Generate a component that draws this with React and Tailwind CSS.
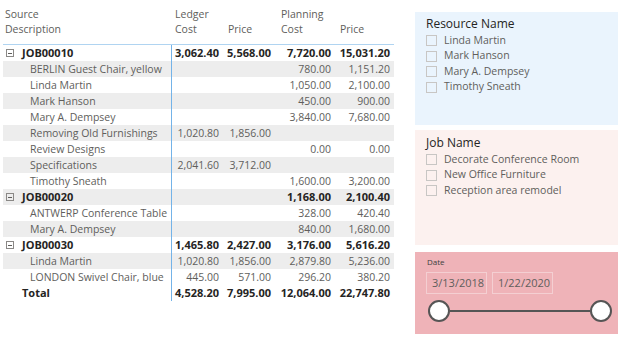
import React from "react";

const rows = [
  { t: "job", n: "JOB00010", v: ["3,062.40", "5,568.00", "7,720.00", "15,031.20"] },
  { n: "BERLIN Guest Chair, yellow", v: ["", "", "780.00", "1,151.20"] },
  { n: "Linda Martin", v: ["", "", "1,050.00", "2,100.00"] },
  { n: "Mark Hanson", v: ["", "", "450.00", "900.00"] },
  { n: "Mary A. Dempsey", v: ["", "", "3,840.00", "7,680.00"] },
  { n: "Removing Old Furnishings", v: ["1,020.80", "1,856.00", "", ""] },
  { n: "Review Designs", v: ["", "", "0.00", "0.00"] },
  { n: "Specifications", v: ["2,041.60", "3,712.00", "", ""] },
  { n: "Timothy Sneath", v: ["", "", "1,600.00", "3,200.00"] },
  { t: "job", n: "JOB00020", v: ["", "", "1,168.00", "2,100.40"] },
  { n: "ANTWERP Conference Table", v: ["", "", "328.00", "420.40"] },
  { n: "Mary A. Dempsey", v: ["", "", "840.00", "1,680.00"] },
  { t: "job", n: "JOB00030", v: ["1,465.80", "2,427.00", "3,176.00", "5,616.20"] },
  { n: "Linda Martin", v: ["1,020.80", "1,856.00", "2,879.80", "5,236.00"] },
  { n: "LONDON Swivel Chair, blue", v: ["445.00", "571.00", "296.20", "380.20"] },
  { t: "total", n: "Total", v: ["4,528.20", "7,995.00", "12,064.00", "22,747.80"] },
];

const font = { fontFamily: "'Open Sans', 'Noto Sans', sans-serif" };

function Collapse() {
  return (
    <div className="ml-[3px] mr-[8px] w-[8px] h-[8px] border border-[#8a8886] flex items-center justify-center shrink-0">
      <div className="w-[4px] h-[1px] bg-[#605e5c]" />
    </div>
  );
}

function Row({ r, i }) {
  const bold = r.t === "job" || r.t === "total";
  const gray = r.t !== "total" && i % 2 === 1;
  const textCls = bold ? "font-bold text-[#252423] text-[11px]" : "text-[#605e5c] text-[10.5px]";
  return (
    <div
      className={`grid grid-cols-[168px_53px_53px_59px_58px] h-[16px] items-center leading-[16px] ${
        gray ? "bg-[#ededed]" : "bg-white"
      } ${textCls}`}
    >
      <div className="flex items-center h-full whitespace-nowrap overflow-hidden">
        {r.t === "job" ? (
          <>
            <Collapse />
            <span>{r.n}</span>
          </>
        ) : r.t === "total" ? (
          <span className="pl-[19px]">{r.n}</span>
        ) : (
          <span className="pl-[27px]">{r.n}</span>
        )}
      </div>
      <div className="h-full text-right pr-[5px] border-l border-l-[#74b3e8]">{r.v[0]}</div>
      <div className="h-full text-right pr-[6px]">{r.v[1]}</div>
      <div className="h-full text-right pr-[5px]">{r.v[2]}</div>
      <div className="h-full text-right pr-[4px]">{r.v[3]}</div>
    </div>
  );
}

function Check({ label }) {
  return (
    <div className="flex items-center h-[15.5px] text-[10.5px] text-[#605e5c]">
      <div className="w-[11px] h-[11px] border border-[#c8c6c4] mr-[7px] shrink-0" />
      <span className="whitespace-nowrap">{label}</span>
    </div>
  );
}

function Slicer({ title, items, bg, h, pt }) {
  return (
    <div className={`${bg} ${h} ${pt} pl-[11px]`}>
      <div className="text-[12px] leading-[16px] text-[#252423] mb-[1px]">{title}</div>
      {items.map((it) => (
        <Check key={it} label={it} />
      ))}
    </div>
  );
}

export default function App() {
  return (
    <div className="w-[624px] h-[340px] bg-white flex" style={font}>
      <div className="ml-[3px] w-[391px]">
        <div className="grid grid-cols-[168px_53px_53px_59px_58px] h-[45px] border-b border-[#b0d4f1] pt-[7px] text-[10.5px] leading-[15px] text-[#605e5c]">
          <div className="pl-[2px]">
            <div>Source</div>
            <div>Description</div>
          </div>
          <div className="pl-[4px]">
            <div>Ledger</div>
            <div>Cost</div>
          </div>
          <div className="pl-[4px]">
            <div>&nbsp;</div>
            <div>Price</div>
          </div>
          <div className="pl-[4px]">
            <div>Planning</div>
            <div>Cost</div>
          </div>
          <div className="pl-[4px]">
            <div>&nbsp;</div>
            <div>Price</div>
          </div>
        </div>
        {rows.map((r, i) => (
          <Row key={i} r={r} i={i} />
        ))}
      </div>
      <div className="ml-[21px] w-[203px] flex flex-col pt-[12px]">
        <Slicer
          title="Resource Name"
          items={["Linda Martin", "Mark Hanson", "Mary A. Dempsey", "Timothy Sneath"]}
          bg="bg-[#eaf4fd]"
          h="h-[113px]"
          pt="pt-[4px]"
        />
        <div className="h-[5px]" />
        <Slicer
          title="Job Name"
          items={["Decorate Conference Room", "New Office Furniture", "Reception area remodel"]}
          bg="bg-[#fcf1ef]"
          h="h-[115px]"
          pt="pt-[5px]"
        />
        <div className="h-[7px]" />
        <div className="bg-[#efb3b8] h-[82px] pl-[11px] pr-[6px] pt-[5px]">
          <div className="text-[8px] leading-[10px] text-[#404040] pl-[1px]">Date</div>
          <div className="flex gap-[5px] mt-[5px]">
            <div className="w-[61px] h-[22px] border border-[#f4cfd2] text-[11px] text-[#605e5c] flex items-center pl-[5px]">
              3/13/2018
            </div>
            <div className="w-[61px] h-[22px] border border-[#f4cfd2] text-[11px] text-[#605e5c] flex items-center pl-[5px]">
              1/22/2020
            </div>
          </div>
          <div className="flex items-center mt-[6px] pl-[2px]">
            <div className="w-[22px] h-[22px] rounded-full bg-white border-2 border-[#555555] shrink-0" />
            <div className="flex-1 h-[2px] bg-[#555555]" />
            <div className="w-[22px] h-[22px] rounded-full bg-white border-2 border-[#555555] shrink-0" />
          </div>
        </div>
      </div>
    </div>
  );
}
